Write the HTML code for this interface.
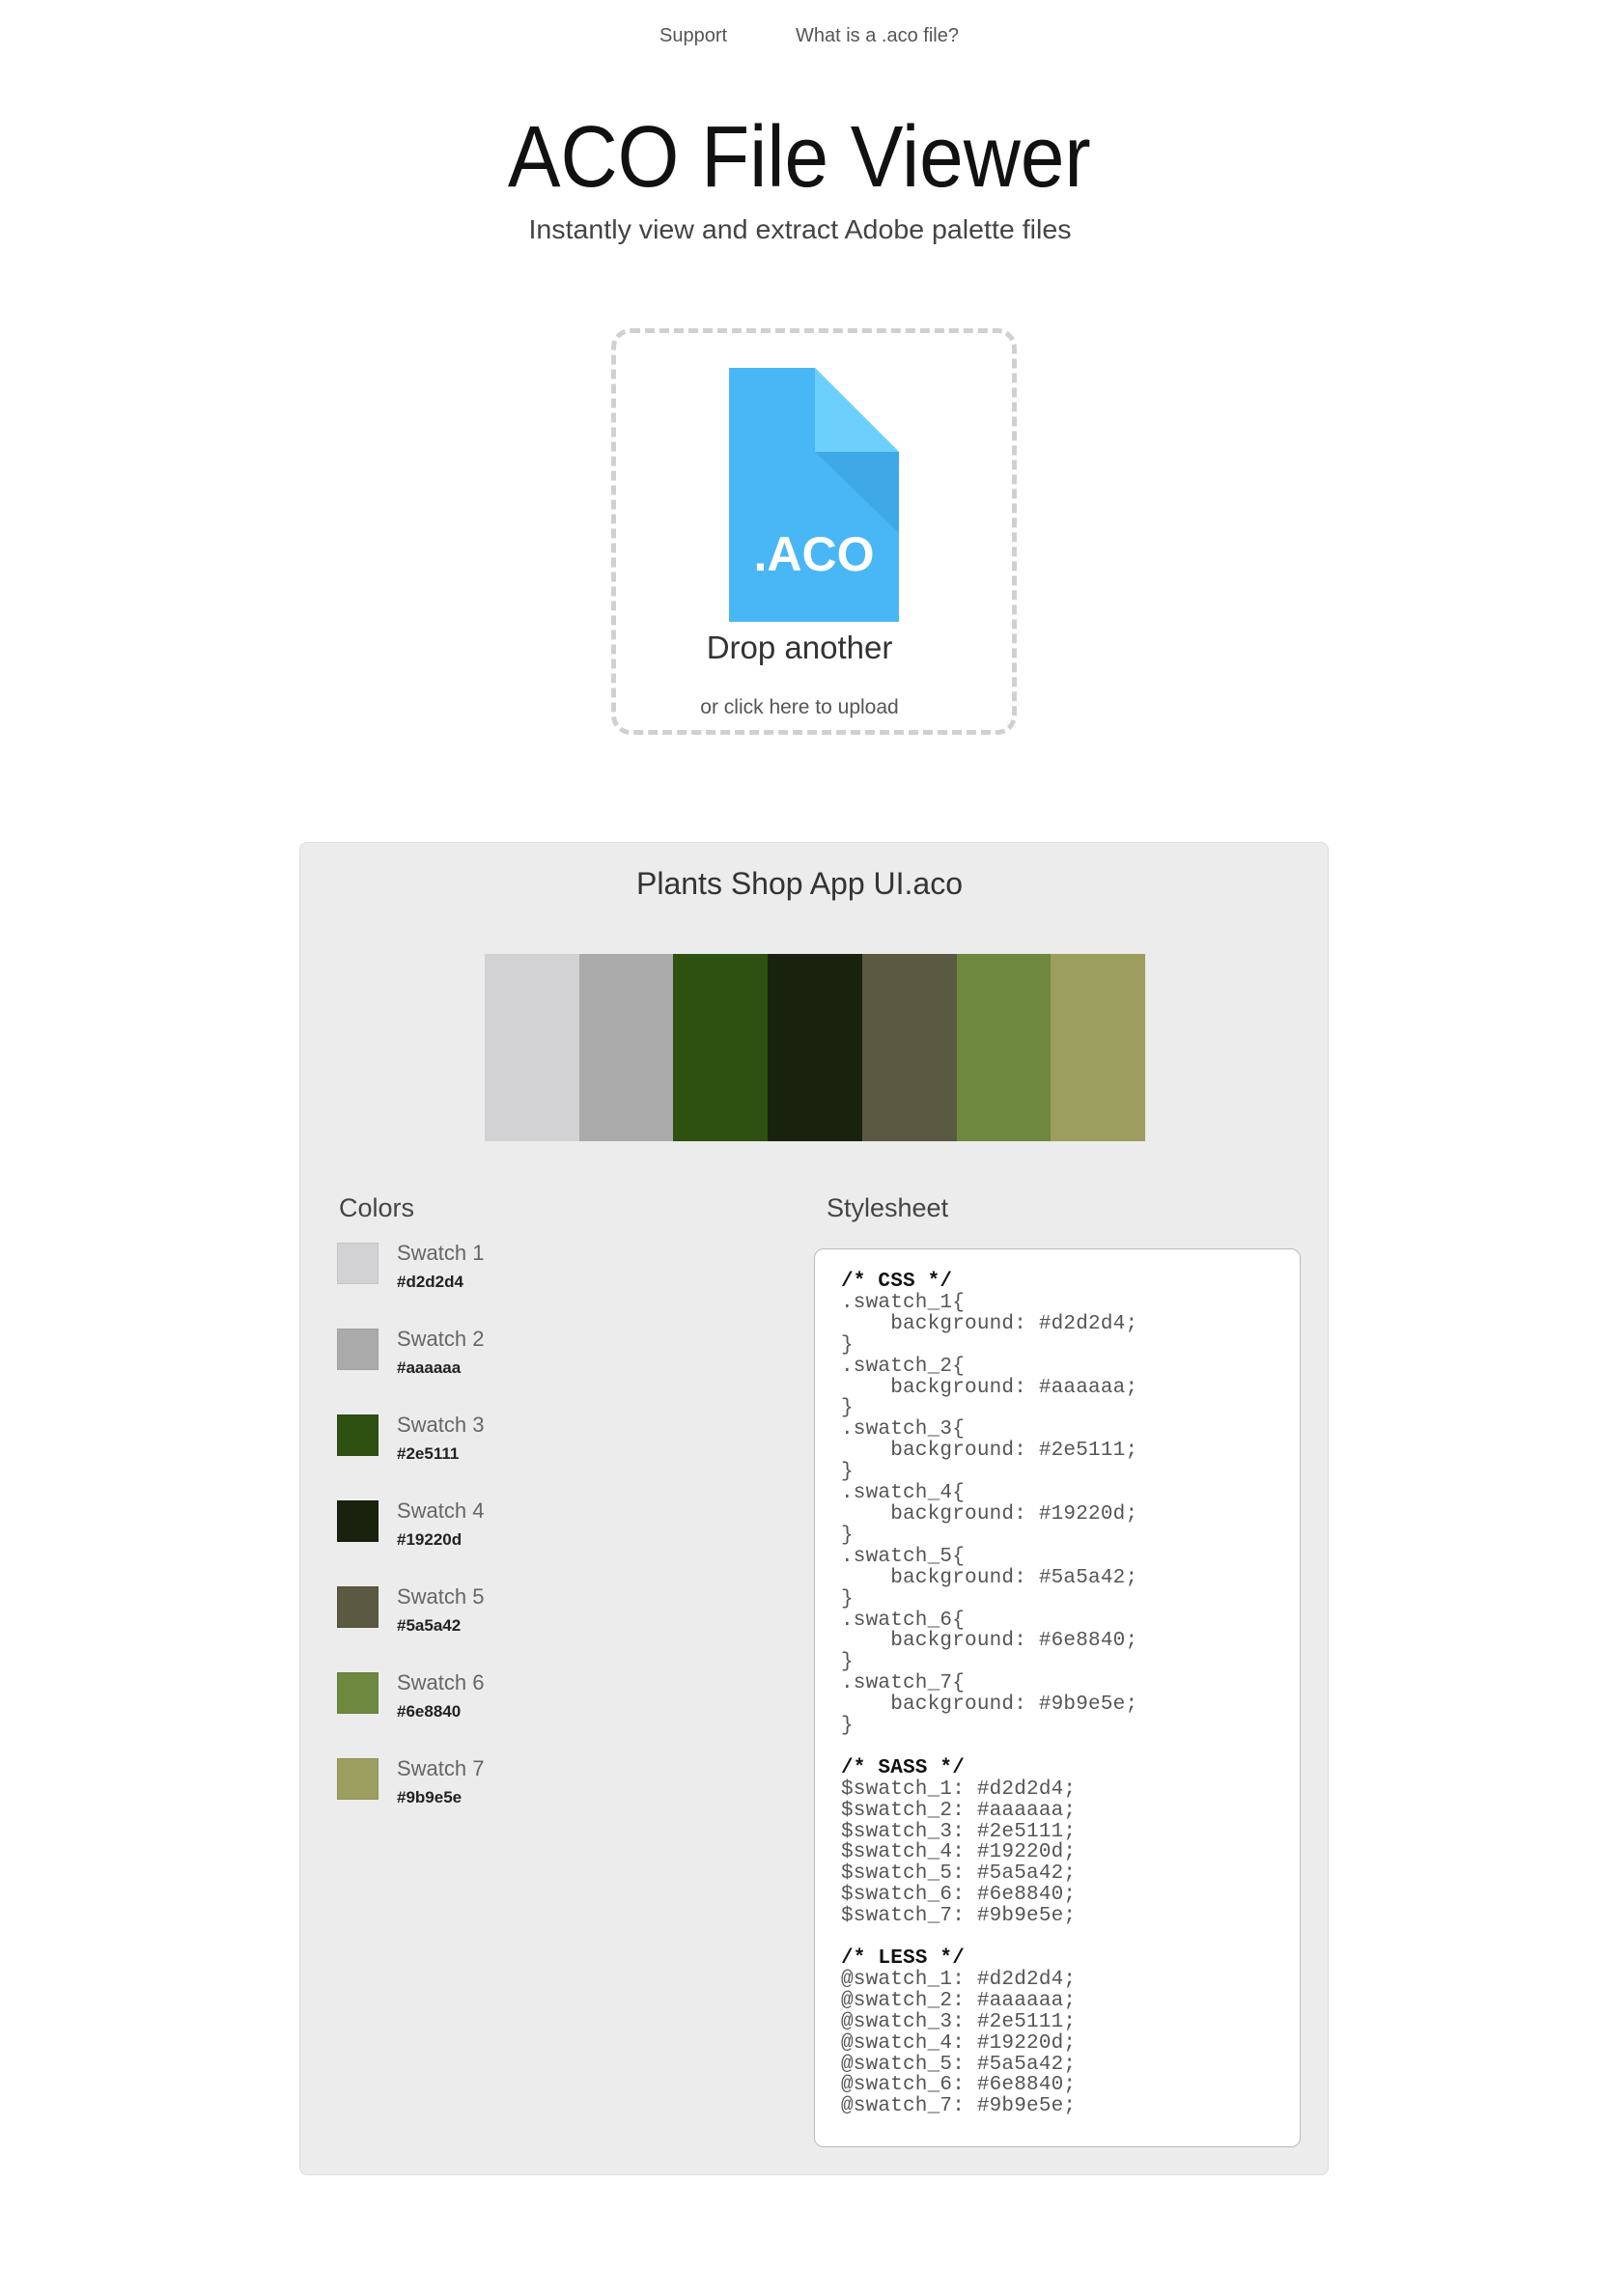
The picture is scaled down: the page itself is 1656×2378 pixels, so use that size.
<!DOCTYPE html>
<html><head><meta charset="utf-8"><style>
*{margin:0;padding:0;box-sizing:border-box}
body{width:1656px;height:2378px;background:#fff;position:relative;font-family:"Liberation Sans",sans-serif;overflow:hidden}
.a{position:absolute;white-space:nowrap}
.c{position:absolute;left:0;width:1656px;text-align:center;white-space:nowrap}
.sw{position:absolute;left:349px;width:43px;height:43px;border:1px solid rgba(0,0,0,0.06)}
.nm{position:absolute;left:411px;font-size:22px;color:#666}
.hx{position:absolute;left:411px;font-size:17px;font-weight:bold;color:#222}
pre{position:absolute;left:871px;top:1317px;font-family:"Liberation Mono",monospace;font-size:21px;line-height:21.9px;color:#555;letter-spacing:0.2px}
pre b{color:#111}
</style></head><body>
<div class="a" style="left:683px;top:26px;font-size:20px;color:#555">Support</div>
<div class="a" style="left:824px;top:26px;font-size:20px;color:#555">What is a .aco file?</div>
<div class="c" style="top:112px;font-size:90px;color:#111"><span style="display:inline-block;transform:scaleX(0.91)">ACO File Viewer</span></div>
<div class="c" style="top:222px;font-size:28px;color:#444"><span style="display:inline-block;transform:scaleX(1.02)">Instantly view and extract Adobe palette files</span></div>
<div class="a" style="left:633px;top:340px;width:420px;height:421px;border:5px dashed #d0d0d0;border-radius:20px"></div>
<svg class="a" style="left:755px;top:381px" width="176" height="263" viewBox="0 0 176 263">
<polygon points="0,0 89,0 176,87 176,263 0,263" fill="#49b6f5"/>
<polygon points="89,0 176,87 89,87" fill="#6dcffc"/>
<polygon points="89,87 176,87 176,171" fill="#3ea9e6"/>
<text x="88" y="210" text-anchor="middle" font-family="Liberation Sans" font-weight="bold" font-size="50" fill="#fff">.ACO</text>
</svg>
<div class="c" style="top:652px;font-size:33px;color:#333">Drop another</div>
<div class="c" style="top:721px;font-size:21px;color:#555">or click here to upload</div>
<div class="a" style="left:310px;top:872px;width:1066px;height:1381px;background:#ececec;border:1px solid #ddd;border-radius:8px"></div>
<div class="c" style="top:897px;font-size:32px;color:#333"><span style="display:inline-block;transform:scaleX(1.0)">Plants Shop App UI.aco</span></div>
<div class="a" style="left:502px;top:988px;width:684px;height:194px;display:flex">
<div style="flex:1;background:#d2d2d4"></div><div style="flex:1;background:#aaaaaa"></div><div style="flex:1;background:#2e5111"></div><div style="flex:1;background:#19220d"></div><div style="flex:1;background:#5a5a42"></div><div style="flex:1;background:#6e8840"></div><div style="flex:1;background:#9b9e5e"></div></div>
<div class="a" style="left:351px;top:1236px;font-size:27px;color:#444">Colors</div>
<div class="a" style="left:856px;top:1236px;font-size:27px;color:#444">Stylesheet</div>

<div class="sw" style="top:1287px;background:#d2d2d4"></div><div class="nm" style="top:1285px">Swatch 1</div><div class="hx" style="top:1318px">#d2d2d4</div>
<div class="sw" style="top:1376px;background:#aaaaaa"></div><div class="nm" style="top:1374px">Swatch 2</div><div class="hx" style="top:1407px">#aaaaaa</div>
<div class="sw" style="top:1465px;background:#2e5111"></div><div class="nm" style="top:1463px">Swatch 3</div><div class="hx" style="top:1496px">#2e5111</div>
<div class="sw" style="top:1554px;background:#19220d"></div><div class="nm" style="top:1552px">Swatch 4</div><div class="hx" style="top:1585px">#19220d</div>
<div class="sw" style="top:1643px;background:#5a5a42"></div><div class="nm" style="top:1641px">Swatch 5</div><div class="hx" style="top:1674px">#5a5a42</div>
<div class="sw" style="top:1732px;background:#6e8840"></div><div class="nm" style="top:1730px">Swatch 6</div><div class="hx" style="top:1763px">#6e8840</div>
<div class="sw" style="top:1821px;background:#9b9e5e"></div><div class="nm" style="top:1819px">Swatch 7</div><div class="hx" style="top:1852px">#9b9e5e</div>

<div class="a" style="left:843px;top:1293px;width:504px;height:931px;background:#fff;border:1px solid #bbb;border-radius:10px"></div>
<pre><b>/* CSS */</b>
.swatch_1{
    background: #d2d2d4;
}
.swatch_2{
    background: #aaaaaa;
}
.swatch_3{
    background: #2e5111;
}
.swatch_4{
    background: #19220d;
}
.swatch_5{
    background: #5a5a42;
}
.swatch_6{
    background: #6e8840;
}
.swatch_7{
    background: #9b9e5e;
}

<b>/* SASS */</b>
$swatch_1: #d2d2d4;
$swatch_2: #aaaaaa;
$swatch_3: #2e5111;
$swatch_4: #19220d;
$swatch_5: #5a5a42;
$swatch_6: #6e8840;
$swatch_7: #9b9e5e;

<b>/* LESS */</b>
@swatch_1: #d2d2d4;
@swatch_2: #aaaaaa;
@swatch_3: #2e5111;
@swatch_4: #19220d;
@swatch_5: #5a5a42;
@swatch_6: #6e8840;
@swatch_7: #9b9e5e;</pre>
</body></html>
